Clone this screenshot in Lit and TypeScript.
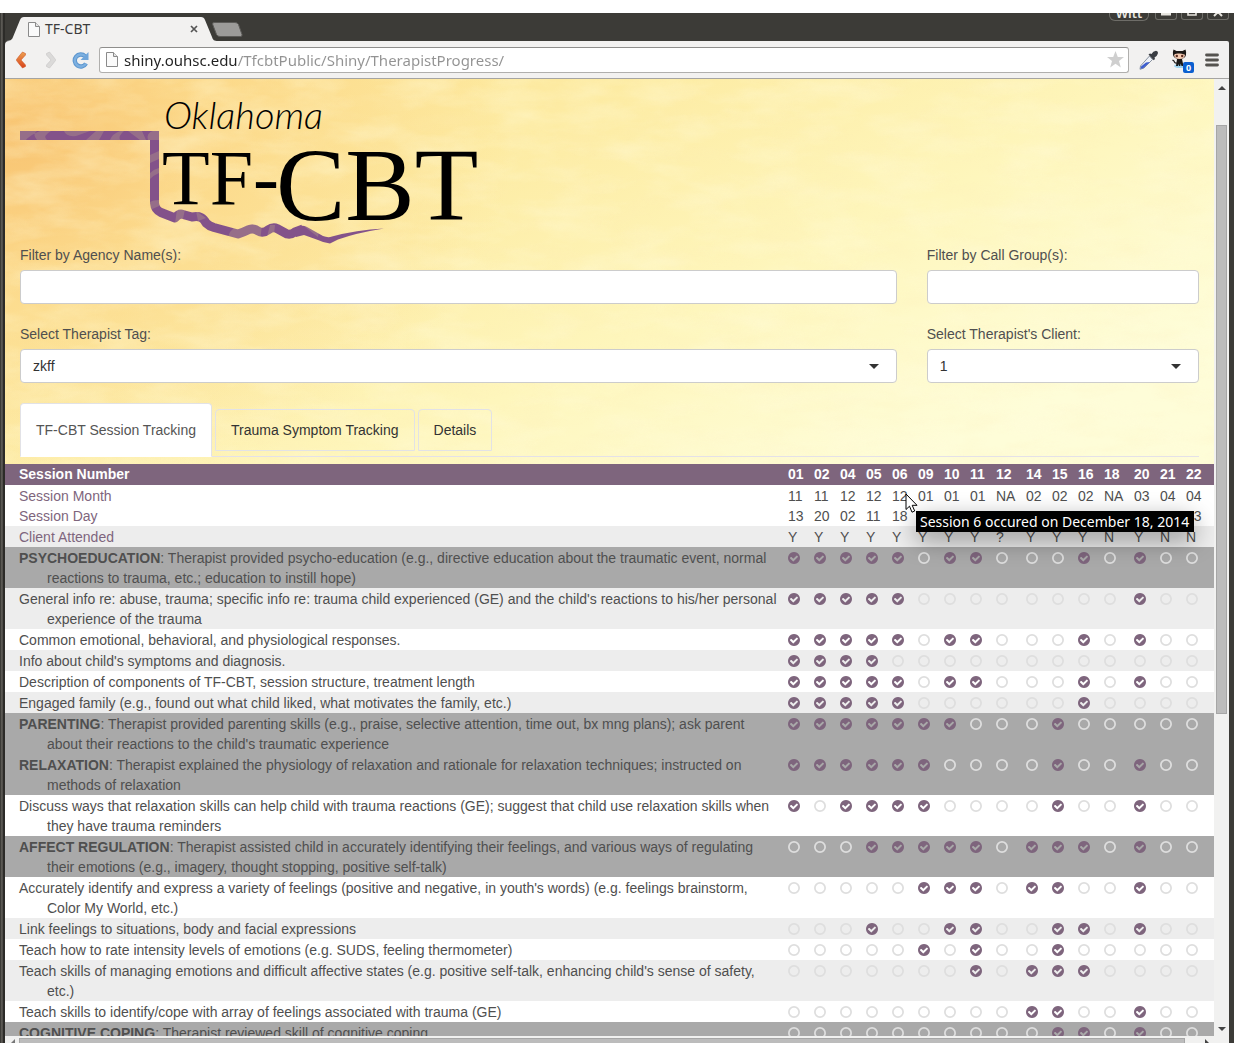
import { LitElement, html, css, svg, nothing } from "lit";
import { customElement, property, state } from "lit/decorators.js";
import { classMap } from "lit/directives/class-map.js";

interface SkillRow {
  heading?: string;
  text: string;
  tone: "light" | "shade" | "dark";
  marks: string;
}

const SESSIONS = ["01", "02", "04", "05", "06", "09", "10", "11", "12", "14", "15", "16", "18", "20", "21", "22"];
const MONTHS = ["11", "11", "12", "12", "12", "01", "01", "01", "NA", "02", "02", "02", "NA", "03", "04", "04"];
const DAYS = ["13", "20", "02", "11", "18", "", "", "", "", "", "", "", "", "", "", "13"];
const ATTENDED = ["Y", "Y", "Y", "Y", "Y", "Y", "Y", "Y", "?", "Y", "Y", "Y", "N", "Y", "N", "N"];

const SKILLS: SkillRow[] = [
  { heading: "PSYCHOEDUCATION", text: "Therapist provided psycho-education (e.g., directive education about the traumatic event, normal reactions to trauma, etc.; education to instill hope)", tone: "dark", marks: "1111101100010100" },
  { text: "General info re: abuse, trauma; specific info re: trauma child experienced (GE) and the child's reactions to his/her personal experience of the trauma", tone: "shade", marks: "1111100000000100" },
  { text: "Common emotional, behavioral, and physiological responses.", tone: "light", marks: "1111101100010100" },
  { text: "Info about child's symptoms and diagnosis.", tone: "shade", marks: "1111000000000000" },
  { text: "Description of components of TF-CBT, session structure, treatment length", tone: "light", marks: "1111101100010100" },
  { text: "Engaged family (e.g., found out what child liked, what motivates the family, etc.)", tone: "shade", marks: "1111100000010000" },
  { heading: "PARENTING", text: "Therapist provided parenting skills (e.g., praise, selective attention, time out, bx mng plans); ask parent about their reactions to the child's traumatic experience", tone: "dark", marks: "1111111000100000" },
  { heading: "RELAXATION", text: "Therapist explained the physiology of relaxation and rationale for relaxation techniques; instructed on methods of relaxation", tone: "dark", marks: "1111110000100100" },
  { text: "Discuss ways that relaxation skills can help child with trauma reactions (GE); suggest that child use relaxation skills when they have trauma reminders", tone: "light", marks: "1011110000100100" },
  { heading: "AFFECT REGULATION", text: "Therapist assisted child in accurately identifying their feelings, and various ways of regulating their emotions (e.g., imagery, thought stopping, positive self-talk)", tone: "dark", marks: "0001111101110100" },
  { text: "Accurately identify and express a variety of feelings (positive and negative, in youth's words) (e.g. feelings brainstorm, Color My World, etc.)", tone: "light", marks: "0000011101100100" },
  { text: "Link feelings to situations, body and facial expressions", tone: "shade", marks: "0001001100110100" },
  { text: "Teach how to rate intensity levels of emotions (e.g. SUDS, feeling thermometer)", tone: "light", marks: "0000010100100000" },
  { text: "Teach skills of managing emotions and difficult affective states (e.g. positive self-talk, enhancing child's sense of safety, etc.)", tone: "shade", marks: "0000000101110000" },
  { text: "Teach skills to identify/cope with array of feelings associated with trauma (GE)", tone: "light", marks: "0000000001100100" },
  { heading: "COGNITIVE COPING", text: "Therapist reviewed skill of cognitive coping", tone: "dark", marks: "0000000000110100" },
];

const checkedMark = html`<svg class="mark on" viewBox="128 128 1536 1536" role="img" aria-label="covered">
  <path d="M1412 734q0-28-18-46l-91-90q-19-19-45-19t-45 19l-408 407-226-226q-19-19-45-19t-45 19l-91 90q-18 18-18 46 0 27 18 45l362 362q19 19 45 19 27 0 46-19l543-543q18-18 18-45zm252 162q0 209-103 385.5t-279.5 279.5-385.5 103-385.5-103-279.5-279.5-103-385.5 103-385.5 279.5-279.5 385.5-103 385.5 103 279.5 279.5 103 385.5z"/>
</svg>`;
const emptyMark = html`<svg class="mark off" viewBox="128 128 1536 1536" role="img" aria-label="not covered">
  <circle cx="896" cy="896" r="656" fill="none" stroke="currentColor" stroke-width="224"/>
</svg>`;

const pageIcon = html`<svg class="page-icon" width="12" height="15" viewBox="0 0 12 15" aria-hidden="true">
  <path d="M.5.5h7l4 4v10H.5z" fill="#fafafa" stroke="#8a8a8a"/>
  <path d="M7.5.5v4h4" fill="#e4e4e4" stroke="#8a8a8a"/>
</svg>`;

@customElement("browser-chrome")
export class BrowserChrome extends LitElement {
  static styles = css`
    :host { display: block; font-family: "Noto Sans", "Open Sans", sans-serif; }
    button { border: 0; padding: 0; background: none; font: inherit; color: inherit; }
    .strip { display: flex; align-items: flex-start; height: 28px; background: #3c3b37; overflow: hidden; }
    .tab { display: grid; grid-template-columns: 213px; height: 24px; margin-top: 4px; }
    .tab-shape, .tab-body { grid-area: 1 / 1; }
    .tab-body { display: flex; align-items: center; gap: 5px; padding: 0 20px 0 23px; font-size: 14px; line-height: 24px; color: #3c3c3c; }
    .tab-title { flex: 1; }
    .tab-close { display: grid; }
    .new-tab { display: grid; margin: 9px 0 0 -6px; }
    .spacer { flex: 1; }
    .controls { display: flex; gap: 4px; }
    .control { display: flex; align-items: flex-end; justify-content: center; width: 22px; height: 7px; border: 1px solid #6e6d68; border-top: 0; border-radius: 0 0 3px 3px; overflow: hidden; box-sizing: border-box; color: #e8e6e0; }
    .control.user { width: 40px; height: 8px; margin-right: 2px; border-radius: 0 0 6px 6px; font-size: 13px; font-weight: 600; line-height: 14px; }
    .toolbar { display: flex; align-items: center; height: 37px; padding: 0 10px 0 11px; background: #f2f1f0; border-bottom: 1px solid #a5a4a2; border-radius: 4px 2px 0 0; }
    .nav { display: flex; gap: 16px; align-items: center; margin-right: 10px; }
    .nav button, .tools button { display: grid; }
    .forward { margin-left: 4px; }
    .omnibox { flex: 1; display: flex; align-items: center; gap: 6px; height: 24px; padding: 0 4px 0 6px; background: #fff; border: 1px solid #b0afad; border-top-color: #8f8e8c; border-radius: 3px; }
    .address { flex: 1; min-width: 0; border: 0; padding: 0; outline: 0; font: 15px/22px "Noto Sans", "Open Sans", sans-serif; color: transparent; background-image: linear-gradient(90deg, #222 114px, #929292 114px); -webkit-background-clip: text; background-clip: text; }
    .star { display: grid; }
    .tools { display: flex; align-items: center; gap: 10px; margin-left: 10px; }
  `;

  @property() title = "";
  @property() url = "";

  render() {
    return html`
      <div class="strip">
        <div class="tab">
          <svg class="tab-shape" width="213" height="24" viewBox="0 0 213 24" aria-hidden="true">
            <path d="M0 24C5 24 7 23 8 20L15 3Q16 0 19 0H196Q199 0 200 3L207 20C208 23 209 24 213 24z" fill="#f2f1f0"/>
          </svg>
          <div class="tab-body">
            ${pageIcon}<span class="tab-title">${this.title}</span>
            <button class="tab-close" aria-label="Close tab">
              <svg width="8" height="8" viewBox="0 0 8 8"><path d="M1 1l6 6M7 1L1 7" stroke="#555" stroke-width="1.7"/></svg>
            </button>
          </div>
        </div>
        <button class="new-tab" aria-label="New tab">
          <svg width="31" height="15" viewBox="0 0 31 15"><path d="M2 .5H23Q25.500.5 26.500 2.500L30 12.500Q30.500 14.500 28.500 14.500H8Q5.500 14.500 4.500 12.500L.7 2.500Q0 .5 2 .5z" fill="#9c9b99" stroke="#5c5b58"/></svg>
        </button>
        <span class="spacer"></span>
        <div class="controls">
          <button class="control user">Witt</button>
          <button class="control" aria-label="Minimize"><svg width="10" height="6" viewBox="0 0 10 6"><path d="M0 1h10" stroke="#e8e6e0" stroke-width="3"/></svg></button>
          <button class="control" aria-label="Maximize"><svg width="10" height="6" viewBox="0 0 10 6"><path d="M1-4V2H9V-4" fill="none" stroke="#e8e6e0" stroke-width="1.600"/></svg></button>
          <button class="control" aria-label="Close"><svg width="10" height="6" viewBox="0 0 10 6"><path d="M1 3L9-5M1-5L9 3" stroke="#e8e6e0" stroke-width="2"/></svg></button>
        </div>
      </div>
      <div class="toolbar">
        <div class="nav">
          <button aria-label="Back"><svg width="10" height="18" viewBox="0 0 10 18">
            <defs><linearGradient id="o" x2="0" y2="1"><stop offset="0" stop-color="#eda050"/><stop offset="1" stop-color="#d8431b"/></linearGradient></defs>
            <path d="M6.500 1L9.500 2.500V4L5 9l4.500 5v1.500L6.500 17Q3 13 .5 9.500V8.500Q3 5 6.500 1z" fill="url(#o)" stroke="#cf5a2a" stroke-width=".6"/></svg></button>
          <button class="forward" aria-label="Forward"><svg width="10" height="18" viewBox="0 0 10 18">
            <path d="M3.500 1L.5 2.500V4L5 9 .5 14v1.500L3.500 17Q7 13 9.500 9.500V8.500Q7 5 3.500 1z" fill="#dbdad9" stroke="#c6c5c4" stroke-width=".6"/></svg></button>
          <button aria-label="Reload"><svg width="17" height="18" viewBox="0 0 17 18">
            <path d="M13 5.200A6 6 0 1 0 14 12.500" fill="none" stroke="#5b95ce" stroke-width="4.400"/>
            <path d="M13 5.200A6 6 0 1 0 14 12.500" fill="none" stroke="#7db0e0" stroke-width="2.400"/>
            <path d="M16.500 1V9H8.500z" fill="#6fa5da"/></svg></button>
        </div>
        <div class="omnibox">
          ${pageIcon}
          <input class="address" aria-label="Address" .value=${this.url} />
          <button class="star" aria-label="Bookmark"><svg width="17" height="17" viewBox="0 0 17 17"><path d="M8.500 0l2.300 6H17l-5 4 1.800 6.500L8.500 12.800 3.200 16.500 5 10 0 6h6.200z" fill="#cfcfcf"/></svg></button>
        </div>
        <div class="tools">
          <button aria-label="Color picker"><svg width="20" height="20" viewBox="0 0 20 20">
            <path d="M10.500 6L13.500 9.500 5 18 1 19.300 1.500 16z" fill="#eef1f6" stroke="#8a93a0"/>
            <path d="M7 12.500l4-.5-6.500 6-3 1 .5-2.500z" fill="#3d5ed0"/>
            <path d="M9.500 4.500l1.500-1 1.500.5Q14 1 17 .8q2.500.7 1.800 3Q18 6.500 15.500 7.500L16 9l-1.300 1.300z" fill="#3a3d42"/></svg></button>
          <button aria-label="GitHub notifications"><svg width="26" height="26" viewBox="0 0 26 26">
            <ellipse cx="11" cy="19" rx="6" ry="2" fill="#9fd3ee"/>
            <path d="M4.500 2.500L7.500 4h6L16.500 2.500Q17.500 5 17 8 16 12 10.500 12T4 8Q3.500 5 4.500 2.500z" fill="#1c1917"/>
            <path d="M5 8Q5.500 6 10.500 6.500T16 8Q15.500 12 10.500 12T5 8z" fill="#f4cbb2"/>
            <circle cx="7.800" cy="9" r="1.200" fill="#5a2c20"/><circle cx="13.200" cy="9" r="1.200" fill="#5a2c20"/>
            <path d="M8 12h5l1.500 7h-2l-.8-2.500-.4 2.500H10L9.500 17l-.5 2H7z" fill="#1c1917"/>
            <path d="M8 16Q5.500 16.500 5 14L3.500 13" fill="none" stroke="#1c1917" stroke-width="1.200"/>
            <rect x="14" y="15" width="11" height="11" rx="2" fill="#0b5fd0"/>
            <text x="19.500" y="24" text-anchor="middle" font-family="Noto Sans, sans-serif" font-size="9" font-weight="700" fill="#fff">0</text></svg></button>
          <button aria-label="Menu"><svg width="14" height="14" viewBox="0 0 14 14"><path d="M1.500 2h11M1.500 7h11M1.500 12h11" stroke="#55534f" stroke-width="2.800" stroke-linecap="round"/></svg></button>
        </div>
      </div>
    `;
  }
}

@customElement("program-logo")
export class ProgramLogo extends LitElement {
  static styles = css`
    :host { display: block; }
    svg { display: block; }
    .script { font-family: "Lato", sans-serif; font-weight: 300; font-style: italic; font-size: 38px; }
    .small-caps { font-family: "Liberation Serif", serif; font-size: 78px; }
    .caps { font-family: "Liberation Serif", serif; font-size: 104px; }
  `;

  render() {
    return html`<svg width="480" height="150" viewBox="0 0 480 150" role="img" aria-label="Oklahoma TF-CBT">
      <defs>
        <mask id="state" maskUnits="userSpaceOnUse" x="0" y="0" width="480" height="150">
          <path d="M0 40.500H134.500V108" fill="none" stroke="#fff" stroke-width="9" stroke-linejoin="miter"/>
          <path d="M134.500 106V108Q135 115 141 117.500L155 123Q159 118 163 119.500L172 122Q178 121 181 122.500 184 124 186 128 189 131 194 132.500L218 139Q224 137 229 134.500 234 133 238 136 243 139 248 135 253 131.500 257 133.500L267 139Q271 140 275 137L283 134" fill="none" stroke="#fff" stroke-width="9" stroke-linejoin="round"/>
          <path d="M272 134L279 131.500Q283 130 287 132L303 141Q308 143 312 141.500 336 135 364 133.500 336 138 318 144.500L310 148.500Q304 148 298 145L284 140 276 142z" fill="#fff"/>
        </mask>
      </defs>
      <g mask="url(#state)">
        <rect width="370" height="150" fill="#83528a"/>
        <g fill="#9a7489" opacity=".85">
          <path d="M0 36h20Q10 40 6 45H0zM17 36q-5 3 0 9h10q-5-4 4-9zM44 36q2 6 12 5l14-5zM66 45l10-9h8l-5 9zM90 45q2-6 10-9h4q-6 5-4 9zM108 36l12 9h6l-4-9zM128 45q-2-7 5-9h6v9z"/>
          <path d="M130 60l9-4v8l-9 4zM130 78q4-4 9-5v5q-5 2-9 6zM130 107q3-2 9-2v6l-9 4z"/>
          <path d="M157 114h8l-2 10-8 5zM176 116l10 7-8 3zM208 144q0-8 10-14h24l-2 16zM245 150l5-20h5l-2 20z"/>
          <path d="M280 128h20l-2 14z"/>
        </g>
      </g>
      ${svg`<text class="script" x="144" y="34">Oklahoma</text>
      <text class="small-caps" x="142" y="109">TF-</text>
      <text class="caps" x="256" y="125">CBT</text>`}
    </svg>`;
  }
}

@customElement("session-table")
export class SessionTable extends LitElement {
  static styles = css`
    :host { display: block; }
    table { width: 100%; table-layout: fixed; border-collapse: collapse; font: 14px/20px "Liberation Sans", Arial, sans-serif; color: #4f4f4f; }
    .col { width: 26px; }
    .col.wide { width: 30px; }
    .col.last { width: 32px; }
    th, td { padding: 1px 0 0 4px; text-align: left; vertical-align: top; font-weight: 400; white-space: nowrap; }
    .name { padding: 1px 4px 0 42px; text-indent: -28px; white-space: normal; }
    .head th { padding-top: 0; padding-bottom: 1px; background: #7e657d; color: #fff; font-weight: 700; }
    .tight th, .tight td { padding-top: 0; }
    .info .name { color: #7e657d; }
    .light { background: #fff; }
    .shade { background: #ededed; }
    .dark { background: #a9a9a9; }
    .mark { display: block; width: 12px; height: 12px; margin-top: 4px; }
    .on { fill: #7e657d; }
    .off { color: #dedede; }
    .hovered { position: relative; }
    .cursor { position: absolute; left: 17px; top: 8px; z-index: 2; }
    .tip { position: absolute; left: 28px; top: 26px; z-index: 1; padding: 0 5px 0 4px; background: #000; color: #fff; font: 14px/21px "Noto Sans", "Open Sans", sans-serif; box-shadow: 0 8px 24px rgba(0, 0, 0, 0.4); }
  `;

  private cells(values: string[], tipAt = -1) {
    return values.map((v, i) => html`<td class=${classMap({ hovered: i === tipAt })}>${v}${i === tipAt
      ? html`<svg class="cursor" width="13" height="21" viewBox="0 0 13 21" aria-hidden="true">
            <path d="M1 1v15.500l3.500-3.300 2.500 6 2.700-1.200-2.500-5.700H12z" fill="#fff" stroke="#000"/></svg>
          <span class="tip" role="tooltip">Session 6 occured on December 18, 2014</span>`
      : nothing}</td>`);
  }

  render() {
    return html`<table>
      <colgroup>
        <col />
        ${SESSIONS.map((s, i) => html`<col class=${classMap({ col: true, wide: MONTHS[i] === "NA", last: i === SESSIONS.length - 1 })} />`)}
      </colgroup>
      <thead>
        <tr class="head"><th class="name" scope="col">Session Number</th>${SESSIONS.map((s) => html`<th scope="col">${s}</th>`)}</tr>
      </thead>
      <tbody>
        <tr class="info light"><th class="name" scope="row">Session Month</th>${this.cells(MONTHS, 4)}</tr>
        <tr class="info light tight"><th class="name" scope="row">Session Day</th>${this.cells(DAYS)}</tr>
        <tr class="info shade"><th class="name" scope="row">Client Attended</th>${this.cells(ATTENDED)}</tr>
        ${SKILLS.map((row) => html`<tr class=${row.tone}>
          <th class="name" scope="row">${row.heading ? html`<b>${row.heading}</b>: ` : nothing}${row.text}</th>
          ${[...row.marks].map((m) => html`<td>${m === "1" ? checkedMark : emptyMark}</td>`)}
        </tr>`)}
      </tbody>
    </table>`;
  }
}

@customElement("app-root")
export class AppRoot extends LitElement {
  static styles = css`
    :host { display: flex; flex-direction: column; box-sizing: border-box; height: 100vh; padding: 13px 0; background: #fff; font: 14px/20px "Liberation Sans", Arial, sans-serif; color: #4f4f4f; }
    .window { flex: 1; min-height: 0; display: flex; flex-direction: column; background: #3c3b37; overflow: hidden; }
    .frame { flex: 1; min-height: 0; display: flex; flex-direction: column; padding: 0 5px; background: linear-gradient(90deg, #3c3b37 1px, #5f5d58 1px, #4c4a46 3px, #2c2b28 3px, #2c2b28 5px, #3c3b37 5px); }
    .view { flex: 1; min-height: 0; display: grid; grid-template-columns: minmax(0, 1fr) 15px; background: #fff; }
    .page { overflow: hidden; min-height: 0; }
    .hero { position: relative; padding: 16px 0 7px; background: radial-gradient(ellipse 42% 95% at 0 15%, #f8c472 0%, rgba(251, 208, 128, 0.55) 40%, rgba(253, 224, 150, 0) 100%), linear-gradient(155deg, #fddf8e 0%, #fdeba2 30%, #fef6bc 58%, #fefdd8 85%); }
    .texture { position: absolute; inset: 0; width: 100%; height: 100%; }
    .content { position: relative; }
    .logo { padding: 0 15px; }
    .filters { display: grid; grid-template-columns: minmax(0, 3fr) minmax(0, 1fr); row-gap: 20px; }
    .field { display: flex; flex-direction: column; gap: 5px; padding: 0 15px; }
    .box { box-sizing: border-box; width: 100%; height: 34px; padding: 0 12px; border: 1px solid #ccc; border-radius: 4px; background: #fff; font: 14px/20px "Liberation Sans", Arial, sans-serif; color: #333; appearance: none; outline: 0; }
    .picker { display: grid; align-items: center; }
    .picker > * { grid-area: 1 / 1; }
    .caret { justify-self: end; margin-right: 18px; pointer-events: none; }
    .tabs { display: flex; align-items: center; gap: 3px; margin: 20px 15px 0; height: 54px; background: linear-gradient(#e4e1e8, #e4e1e8) bottom / 100% 1px no-repeat; }
    .tab { height: 42px; padding: 0 15px; border: 1px solid #e2e2e6; border-radius: 4px 4px 0 0; background: none; font: inherit; color: #333; }
    .tab.active { height: 54px; background: #fff; border-bottom-color: #fff; color: #555; }
    .vbar { display: flex; flex-direction: column; align-items: center; padding: 7px 0 5px; background: #f1f1f0; }
    .vtrack { flex: 1; width: 11px; padding: 35px 0 10px; display: flex; flex-direction: column; }
    .vthumb { flex: 0 0 66%; box-sizing: border-box; background: #bcbcbc; border: 1px solid #a6a6a6; }
    .hbar { display: flex; gap: 4px; height: 7px; padding: 0 20px 0 6px; box-sizing: border-box; background: #f1f1f0; align-items: flex-end; overflow: hidden; }
    .hthumb { flex: 1; height: 5px; background: #bcbcbc; border: 1px solid #a6a6a6; border-bottom: 0; box-sizing: border-box; }
    .harrow { margin-left: 16px; }
  `;

  @state() private tab = 0;

  private select(id: string, label: string, value: string) {
    return html`<div class="field">
      <label for=${id}>${label}</label>
      <div class="picker">
        <select class="box" id=${id}><option>${value}</option></select>
        <svg class="caret" width="10" height="5" viewBox="0 0 10 5" aria-hidden="true"><path d="M0 0h10L5 5z" fill="#333"/></svg>
      </div>
    </div>`;
  }

  render() {
    const tabs = ["TF-CBT Session Tracking", "Trauma Symptom Tracking", "Details"];
    return html`<div class="window">
      <div class="frame">
        <browser-chrome title="TF-CBT" url="shiny.ouhsc.edu/TfcbtPublic/Shiny/TherapistProgress/"></browser-chrome>
        <div class="view">
          <main class="page">
            <section class="hero">
              <svg class="texture" aria-hidden="true">
                <filter id="grain" x="0" y="0" width="100%" height="100%">
                  <feTurbulence type="fractalNoise" baseFrequency="0.02 0.06" numOctaves="4" seed="8"/>
                  <feColorMatrix values="0 0 0 0 .98  0 0 0 0 .84  0 0 0 0 .48  1.600 0 0 0 -.68"/>
                </filter>
                <filter id="glow" x="0" y="0" width="100%" height="100%">
                  <feTurbulence type="fractalNoise" baseFrequency="0.015 0.04" numOctaves="4" seed="21"/>
                  <feColorMatrix values="0 0 0 0 1  0 0 0 0 .96  0 0 0 0 .70  1.800 0 0 0 -.72"/>
                </filter>
                <rect width="100%" height="100%" filter="url(#grain)" opacity=".25"/>
                <rect width="100%" height="100%" filter="url(#glow)" opacity=".45"/>
              </svg>
              <div class="content">
                <program-logo class="logo"></program-logo>
                <div class="filters">
                  <div class="field"><label for="agency">Filter by Agency Name(s):</label><input class="box" id="agency" type="text" /></div>
                  <div class="field"><label for="group">Filter by Call Group(s):</label><input class="box" id="group" type="text" /></div>
                  ${this.select("therapist", "Select Therapist Tag:", "zkff")}
                  ${this.select("client", "Select Therapist's Client:", "1")}
                </div>
                <div class="tabs" role="tablist">
                  ${tabs.map((t, i) => html`<button role="tab" aria-selected=${this.tab === i} class=${classMap({ tab: true, active: this.tab === i })} @click=${() => (this.tab = i)}>${t}</button>`)}
                </div>
              </div>
            </section>
            <session-table></session-table>
          </main>
          <div class="vbar" aria-hidden="true">
            <svg width="8" height="4" viewBox="0 0 8 4"><path d="M0 4h8L4 0z" fill="#444"/></svg>
            <div class="vtrack"><div class="vthumb"></div></div>
            <svg width="8" height="4" viewBox="0 0 8 4"><path d="M0 0h8L4 4z" fill="#444"/></svg>
          </div>
        </div>
        <div class="hbar" aria-hidden="true">
          <svg width="4" height="4" viewBox="0 0 4 4"><path d="M4 0v4H0z" fill="#777"/></svg>
          <div class="hthumb"></div>
          <svg class="harrow" width="4" height="4" viewBox="0 0 4 4"><path d="M0 0v4h4z" fill="#444"/></svg>
        </div>
      </div>
    </div>`;
  }
}
